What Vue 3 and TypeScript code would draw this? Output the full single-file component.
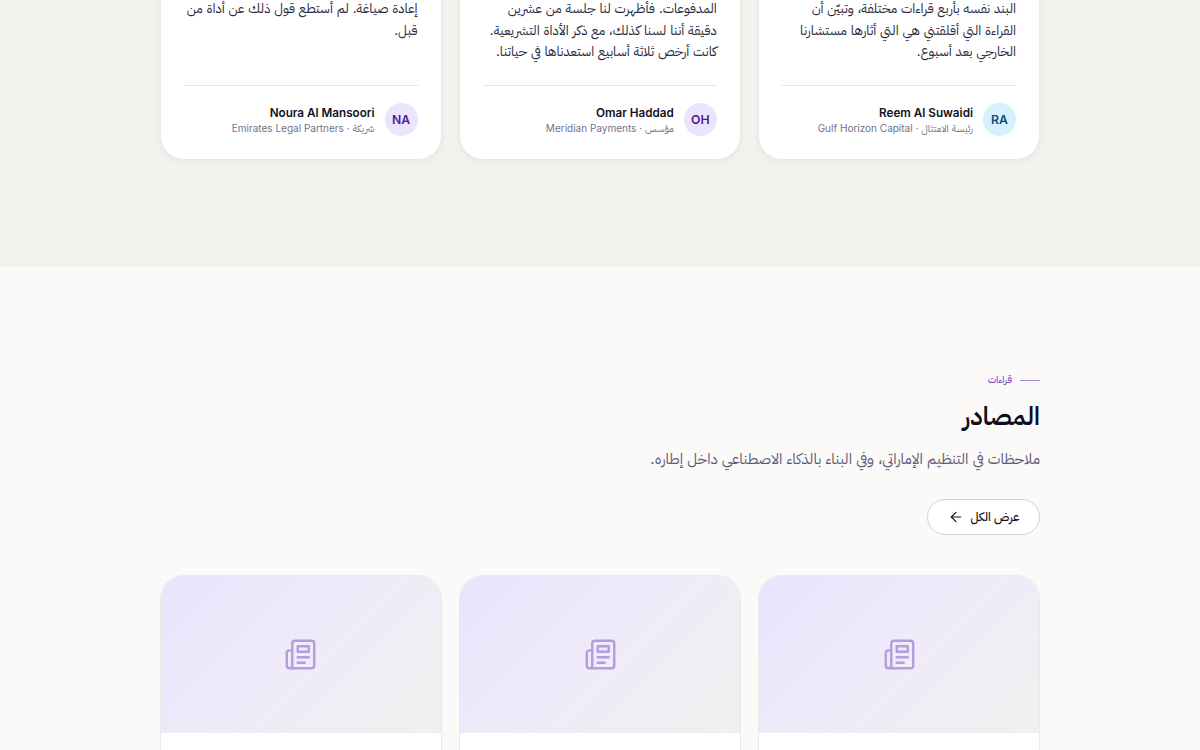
<script setup lang="ts">
interface Quote { text: string; name: string; meta: string; initials: string; tone: string }
const quotes: Quote[] = [
  { text: 'البند نفسه بأربع قراءات مختلفة، وتبيّن أن القراءة التي أقلقتني هي التي أثارها مستشارنا الخارجي بعد أسبوع.', name: 'Reem Al Suwaidi', meta: 'رئيسة الامتثال · Gulf Horizon Capital', initials: 'RA', tone: 'sky' },
  { text: 'المدفوعات. فأظهرت لنا جلسة من عشرين دقيقة أننا لسنا كذلك، مع ذكر الأداة التشريعية. كانت أرخص ثلاثة أسابيع استعدناها في حياتنا.', name: 'Omar Haddad', meta: 'مؤسس · Meridian Payments', initials: 'OH', tone: 'violet' },
  { text: 'إعادة صياغة. لم أستطع قول ذلك عن أداة من قبل.', name: 'Noura Al Mansoori', meta: 'شريكة · Emirates Legal Partners', initials: 'NA', tone: 'violet' },
]
const sources = [1, 2, 3]
</script>

<template>
  <div class="page" dir="rtl">
    <section class="quotes">
      <div class="grid">
        <article v-for="q in quotes" :key="q.name" class="quote">
          <p class="quote-text">{{ q.text }}</p>
          <footer class="person">
            <span class="avatar" :class="q.tone">{{ q.initials }}</span>
            <div class="who">
              <strong>{{ q.name }}</strong>
              <span>{{ q.meta }}</span>
            </div>
          </footer>
        </article>
      </div>
    </section>

    <section class="sources">
      <div class="eyebrow"><i></i><span>قراءات</span></div>
      <h2>المصادر</h2>
      <p class="lead">ملاحظات في التنظيم الإماراتي، وفي البناء بالذكاء الاصطناعي داخل إطاره.</p>
      <button class="all" type="button">
        <span>عرض الكل</span>
        <svg viewBox="0 0 24 24" width="16" height="16" fill="none" stroke="currentColor" stroke-width="1.75" stroke-linecap="round" stroke-linejoin="round"><path d="m12 19-7-7 7-7" /><path d="M19 12H5" /></svg>
      </button>
      <div class="grid cards">
        <article v-for="s in sources" :key="s" class="source">
          <div class="thumb">
            <svg viewBox="0 0 24 24" width="33" height="33" fill="none" stroke="currentColor" stroke-width="1.75" stroke-linecap="round" stroke-linejoin="round">
              <path d="M4 22h16a2 2 0 0 0 2-2V4a2 2 0 0 0-2-2H8a2 2 0 0 0-2 2v16a2 2 0 0 1-2 2Zm0 0a2 2 0 0 1-2-2v-9c0-1.1.9-2 2-2h2" />
              <path d="M18 14h-8" /><path d="M15 18h-5" /><path d="M10 6h8v4h-8V6Z" />
            </svg>
          </div>
        </article>
      </div>
    </section>
  </div>
</template>

<style>
html, body { margin: 0; background: #fbfaf8; }
</style>

<style scoped>
.page {
  width: 1200px;
  height: 750px;
  overflow: hidden;
  font-family: Inter, "IBM Plex Sans Arabic", sans-serif;
  color: #111124;
}
.quotes {
  height: 267px;
  box-sizing: border-box;
  background: #f4f2ee;
  padding: 0 160px 107px;
  display: flex;
  flex-direction: column;
  justify-content: flex-end;
}
.grid {
  display: grid;
  grid-template-columns: repeat(3, 1fr);
  gap: 17.6px;
}
.quote {
  background: #fff;
  border: 1px solid #ebe9e6;
  border-radius: 24px;
  padding: 37px 23px 23px;
  box-shadow: 0 2px 6px rgba(20, 20, 40, 0.05);
  display: flex;
  flex-direction: column;
  height: 200px;
  box-sizing: border-box;
}
.quote-text {
  margin: 0 0 auto;
  font-size: 13.4px;
  line-height: 21.6px;
  color: #2b2b3c;
}
.person {
  border-top: 1px solid #e8e6e3;
  padding-top: 17px;
  display: flex;
  align-items: center;
  gap: 10px;
}
.avatar {
  width: 33px;
  height: 33px;
  border-radius: 50%;
  display: flex;
  align-items: center;
  justify-content: center;
  font-size: 12.2px;
  font-weight: 600;
  flex: none;
}
.violet { background: #ebe4fb; color: #4a1d96; }
.sky { background: #d6f0fc; color: #0c4a6e; }
.who { display: flex; flex-direction: column; min-width: 0; }
.who strong { font-size: 11.7px; line-height: 16px; font-weight: 600; color: #111124; }
.who span { font-size: 10px; line-height: 14px; color: #72728a; }
.sources {
  background: #fbfaf8;
  padding: 107px 160px 0;
}
.eyebrow {
  display: flex;
  align-items: center;
  gap: 8px;
  height: 12px;
  font-size: 9.6px;
  font-weight: 500;
  color: #7c4fc4;
}
.eyebrow i { width: 20px; height: 1px; background: #a08bd0; display: block; }
h2 {
  margin: 12px 0 0;
  font-size: 25px;
  line-height: 36px;
  font-weight: 600;
  color: #0d0d1c;
}
.lead {
  margin: 13px 0 0;
  font-size: 15px;
  line-height: 24px;
  color: #5c5c78;
}
.all {
  margin-top: 28px;
  width: 113px;
  height: 36px;
  box-sizing: border-box;
  border: 1px solid #d4d2d2;
  border-radius: 18px;
  background: #fff;
  color: #111124;
  font: inherit;
  font-size: 12px;
  font-weight: 500;
  display: flex;
  align-items: center;
  justify-content: center;
  gap: 7px;
  padding: 0;
}
.cards { margin-top: 40px; }
.source {
  border: 1px solid #ebe9e6;
  border-radius: 24px;
  overflow: hidden;
  background: #fff;
  height: 300px;
}
.thumb {
  height: 157px;
  background: linear-gradient(135deg, #e9e3fc 0%, #efebf9 50%, #f1efee 100%);
  display: flex;
  align-items: center;
  justify-content: center;
  color: #b39ddf;
}
</style>
